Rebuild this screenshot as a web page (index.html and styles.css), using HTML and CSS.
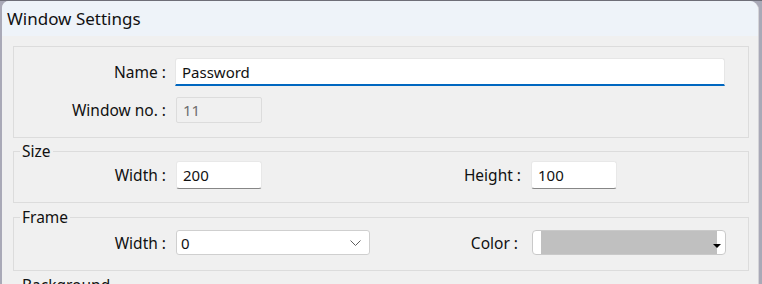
FILE: index.html
```html
<!DOCTYPE html>
<html lang="en">

<head>
  <meta charset="UTF-8" />
  <meta name="viewport" content="width=device-width, initial-scale=1.0" />
  <title>Window Settings</title>
  <link rel="stylesheet" href="styles.css">
</head>

<body>
  <div class="window">
    <!-- 标题栏 -->
    <div class="titlebar">Window Settings</div>

    <div class="content">
      <!-- 基本信息 -->
      <fieldset class="group">
        <div class="row">
          <label class="label">Name :</label>
          <input class="field field-name" type="text" value="Password" />
        </div>
        <div class="row">
          <label class="label">Window no. :</label>
          <input class="field field-off" type="text" value="11" disabled />
        </div>
      </fieldset>

      <!-- 尺寸 -->
      <fieldset class="group group-size">
        <legend>Size</legend>
        <div class="row">
          <label class="label">Width :</label>
          <input class="field field-num" type="text" value="200" />
          <label class="label">Height :</label>
          <input class="field field-num" type="text" value="100" />
        </div>
      </fieldset>

      <!-- 边框 -->
      <fieldset class="group group-frame">
        <legend>Frame</legend>
        <div class="row">
          <label class="label">Width :</label>
          <div class="combo">
            <span>0</span>
            <svg class="chevron" width="11" height="6" viewBox="0 0 11 6">
              <path d="M0.5 0.5 L5.5 5.5 L10.5 0.5" fill="none" stroke="#5f5f5f" stroke-width="1" />
            </svg>
          </div>
          <label class="label label-color">Color :</label>
          <div class="color-pick">
            <div class="swatch"></div>
            <span class="drop"></span>
          </div>
        </div>
      </fieldset>

      <!-- 背景 -->
      <fieldset class="group">
        <legend>Background</legend>
        <div class="row"></div>
      </fieldset>
    </div>
  </div>
</body>

</html>
```

FILE: styles.css
```css
* {
  margin: 0;
  padding: 0;
  box-sizing: border-box;
}

html,
body {
  height: 100%;
  overflow: hidden;
}

body {
  background: #a9a9b7;
  border-top: 1px solid #6e6e78;
  font-family: "Noto Sans", "Open Sans", sans-serif;
  font-size: 15.5px;
  color: #111;
}

.window {
  margin-left: 2px;
  width: 757px;
  height: 100%;
  background: #f0f0f0;
  border-right: 1px solid #d4d4d8;
  border-radius: 7px 9px 0 0;
  overflow: hidden;
}

.titlebar {
  height: 35px;
  background: #eef3f9;
  padding-left: 5px;
  font-size: 17px;
  line-height: 35px;
  color: #111;
}

.content {
  padding: 10px 9px 0 11px;
}

.group {
  border: 1px solid #dcdcdc;
  padding: 11px 0 14px 0;
}

.group legend {
  margin-left: 6px;
  padding: 0 2px;
  line-height: 16px;
  font-size: 15.5px;
}

.group-size {
  margin-top: 5px;
  padding: 2px 0 13px 0;
}

.group-frame {
  margin-top: 6px;
  padding: 5px 0 15px 0;
}

.group-frame+.group {
  margin-top: 6px;
}

.row {
  display: grid;
  grid-template-columns: 152px 196px 139px 1fr;
  column-gap: 10px;
  align-items: center;
}

.row+.row {
  margin-top: 11px;
}

.label {
  text-align: right;
  white-space: nowrap;
}

.field {
  font: 15px "Noto Sans", "Open Sans", sans-serif;
  color: #111;
  outline: none;
  justify-self: start;
  padding-left: 6px;
}

.field-name {
  grid-column: 2 / 5;
  width: 550px;
  height: 28px;
  margin-left: -1px;
  background: #fff;
  border: 1px solid #e6e6e6;
  border-bottom: 2px solid #0067c0;
  border-radius: 3px 3px 0 0;
}

.field-off {
  width: 86px;
  height: 26px;
  background: #f0f0f0;
  border: 1px solid #dcdcdc;
  border-radius: 2px;
  color: #6d6d6d;
}

.field-num {
  width: 86px;
  height: 28px;
  background: #fff;
  border: 1px solid #e8e8e8;
  border-bottom: 1px solid #868686;
  border-radius: 3px;
}

.combo {
  width: 194px;
  height: 25px;
  background: #fff;
  border: 1px solid #cfcfcf;
  border-radius: 3px;
  display: flex;
  align-items: center;
  justify-content: space-between;
  padding: 0 8px 0 4px;
  font-size: 15px;
}

.label-color {
  margin-right: 3px;
}

.color-pick {
  position: relative;
  width: 194px;
  height: 25px;
  margin-left: 1px;
  background: #fff;
  border: 1px solid #c9c9c9;
  border-radius: 4px;
  padding: 0 8px;
}

.swatch {
  height: 100%;
  background: #c0c0c0;
}

.color-pick .drop {
  position: absolute;
  right: 4px;
  bottom: 6px;
  width: 0;
  height: 0;
  border-left: 4px solid transparent;
  border-right: 4px solid transparent;
  border-top: 4px solid #000;
}
```
